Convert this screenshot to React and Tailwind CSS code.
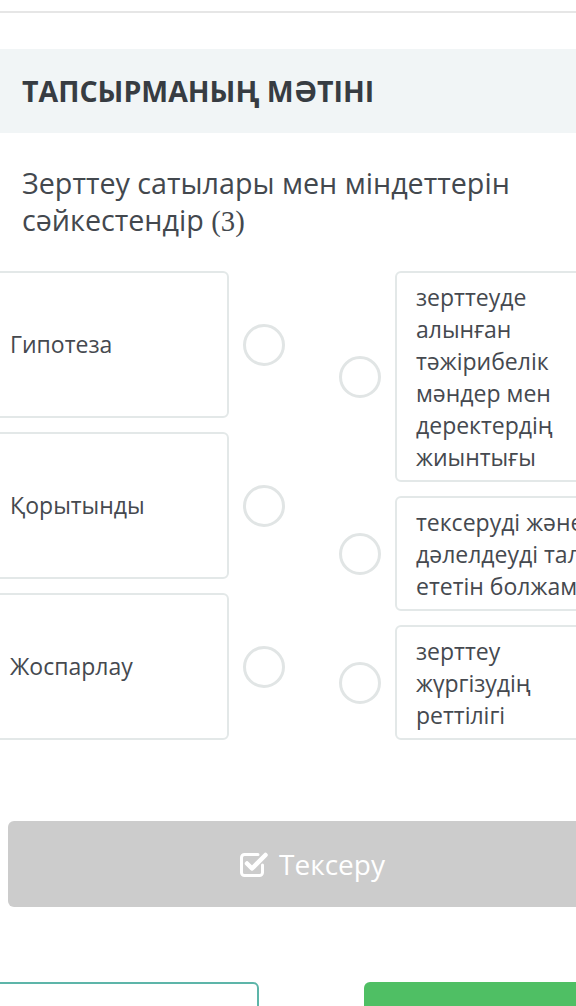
const LEFT = ['Гипотеза', 'Қорытынды', 'Жоспарлау']
const RIGHT = [
  ['зерттеуде', 'алынған', 'тәжірибелік', 'мәндер мен', 'деректердің', 'жиынтығы'],
  ['тексеруді және', 'дәлелдеуді талап', 'ететін болжам'],
  ['зерттеу', 'жүргізудің', 'реттілігі'],
]

function Dot() {
  return <div className="w-[42px] h-[42px] shrink-0 rounded-full border-[3px] border-[#e1e5e5] bg-white" />
}

function CheckSquare() {
  return (
    <svg width="30" height="28" viewBox="0 0 30 28" fill="none">
      <path d="M19 4.5H5.5a3 3 0 0 0-3 3v15a3 3 0 0 0 3 3h15a3 3 0 0 0 3-3v-7.5" stroke="white" strokeWidth="3" strokeLinecap="round" />
      <path d="M8 13.5l5 5L26.5 5" stroke="white" strokeWidth="4.5" strokeLinecap="round" strokeLinejoin="round" />
    </svg>
  )
}

export default function App() {
  return (
    <div className="w-[576px] min-h-[1006px] overflow-hidden bg-white text-[#3f444a]" style={{ fontFamily: '"Open Sans", "Noto Sans", sans-serif' }}>
      <div className="h-[11px]" />
      <div className="h-[2px] bg-[#e6e6e6]" />
      <div className="h-[36px]" />

      {/* task header */}
      <div className="h-[84px] bg-[#f1f5f6] flex items-center pl-[22px]">
        <h1 className="text-[28.5px] font-bold text-[#373c42]">ТАПСЫРМАНЫҢ МӘТІНІ</h1>
      </div>

      <p className="mt-[31px] px-[22px] text-[28.7px] leading-[37px] text-[#43484e]">
        Зерттеу сатылары мен міндеттерін сәйкестендір <span style={{ fontFamily: '"Liberation Serif", serif' }}>(3)</span>
      </p>

      {/* matching */}
      <div className="mt-[31px] flex items-stretch ml-[-12px]">
        <div className="flex flex-col gap-[14px]">
          {LEFT.map(t => (
            <div key={t} className="flex-1 flex items-center">
              <div className="w-[241px] h-full flex items-center pl-[20px] border-2 border-[#e3e8e8] rounded-[6px] text-[23px] text-[#45494f]">
                {t}
              </div>
              <div className="ml-[14px]"><Dot /></div>
            </div>
          ))}
        </div>
        <div className="ml-[54px] flex flex-col gap-[14px]">
          {RIGHT.map((lines, i) => (
            <div key={i} className="flex items-center">
              <Dot />
              <div className="ml-[14px] w-[234px] shrink-0 px-[19px] py-[7.5px] border-2 border-[#e3e8e8] rounded-[6px] text-[23px] leading-[32px] text-[#45494f] whitespace-nowrap">
                {lines.map(l => <div key={l}>{l}</div>)}
              </div>
            </div>
          ))}
        </div>
      </div>

      {/* check button */}
      <div className="mt-[81px] ml-[8px] w-[608px] h-[86px] bg-[#cccccc] rounded-[6px] flex items-center justify-center gap-[10px] text-white text-[28px]">
        <CheckSquare />
        <span>Тексеру</span>
      </div>

      <div className="mt-[75px] flex">
        <div className="ml-[-20px] w-[279px] h-[60px] shrink-0 border-2 border-[#5db5a9] rounded-[6px] bg-white" />
        <div className="ml-[105px] w-[300px] h-[60px] shrink-0 bg-[#4fbf64] rounded-[6px]" />
      </div>
    </div>
  )
}
